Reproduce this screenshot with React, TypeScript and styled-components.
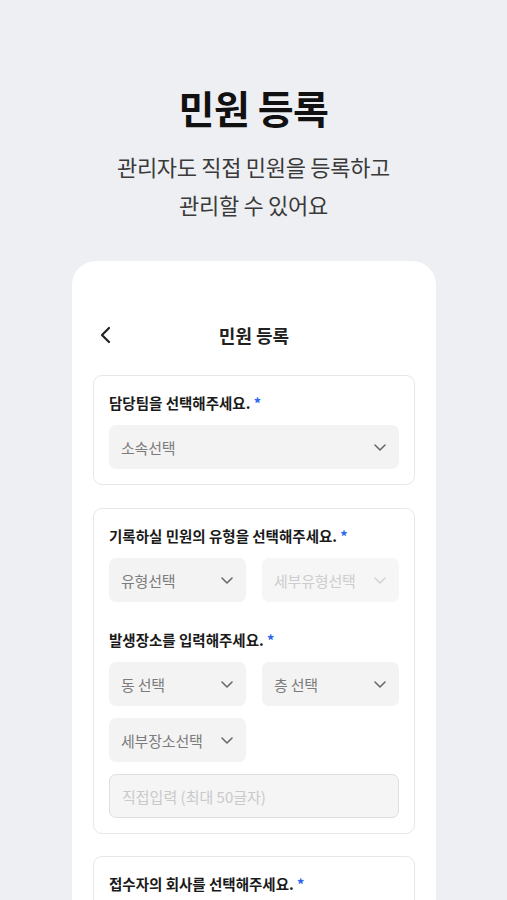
import React from 'react';
import styled, { createGlobalStyle } from 'styled-components';

const GlobalStyle = createGlobalStyle`
    html, body {
        margin: 0;
        padding: 0;
        background: #eeeff2;
        font-family: "Noto Sans CJK KR", "Noto Sans", sans-serif;
        color: #111;
    }
`;

const Page = styled.div`
    width: 507px;
    height: 900px;
    overflow: hidden;
    background: #eeeff2;
    display: flex;
    flex-direction: column;
    align-items: center;
`;

const HeroTitle = styled.h1`
    margin: 84px 0 0;
    font-size: 39px;
    line-height: 46px;
    font-weight: 700;
    color: #111;
    letter-spacing: -0.5px;
`;

const HeroText = styled.p`
    margin: 17px 0 0;
    font-size: 22px;
    line-height: 38px;
    text-align: center;
    color: #3a3a3a;
    letter-spacing: -0.3px;
`;

const Phone = styled.div`
    margin: 38px 0 0 1px;
    width: 364px;
    flex: 1;
    background: #fff;
    border-radius: 24px 24px 0 0;
    padding: 50px 21px 0;
    box-sizing: border-box;
    display: flex;
    flex-direction: column;
    gap: 16px;
`;

const TopBar = styled.div`
    height: 48px;
    display: flex;
    align-items: center;
    justify-content: center;
    position: relative;
`;

const BackButton = styled.span`
    position: absolute;
    left: 3px;
    top: 14px;
    display: flex;
`;

const TopTitle = styled.div`
    font-size: 18px;
    font-weight: 700;
    color: #222;
`;

const Section = styled.div<{ $gapTop?: number }>`
    border: 1px solid #e7e7e7;
    border-radius: 9px;
    padding: 17px 15px 15px;
    margin-top: ${props => props.$gapTop || 0}px;
    display: flex;
    flex-direction: column;
`;

const Label = styled.div<{ $space?: number }>`
    font-size: 14.5px;
    line-height: 20px;
    font-weight: 700;
    color: #1a1a1a;
    margin-top: ${props => props.$space || 0}px;
    margin-bottom: 12px;

    b {
        color: #2f66f0;
        font-weight: 700;
    }
`;

const Row = styled.div`
    display: grid;
    grid-template-columns: 1fr 1fr;
    gap: 16px;
    margin-bottom: 12px;

    &:last-child {
        margin-bottom: 0;
    }
`;

const Select = styled.div<{ $disabled?: boolean }>`
    height: 44px;
    border-radius: 7px;
    background: ${props => props.$disabled ? '#f6f6f6' : '#f3f3f3'};
    padding: 0 13px 0 12px;
    display: flex;
    align-items: center;
    justify-content: space-between;
    font-size: 15px;
    color: ${props => props.$disabled ? '#cdcdcd' : '#7c7c7c'};
    letter-spacing: -0.2px;
`;

const TextInput = styled.div`
    height: 44px;
    border-radius: 7px;
    background: #f5f5f5;
    border: 1px solid #dfdfdf;
    box-sizing: border-box;
    padding: 0 12px;
    display: flex;
    align-items: center;
    font-size: 15px;
    color: #c9c9c9;
`;

const Chevron = ({ light }: { light?: boolean }) => (
    <svg width="12" height="7" viewBox="0 0 12 7">
        <path d="M1 1l5 5 5-5" fill="none" stroke={light ? '#d4d4d4' : '#6a6a6a'} strokeWidth="1.6" strokeLinecap="round" strokeLinejoin="round" />
    </svg>
);

const Dropdown = ({ text, disabled }: { text: string, disabled?: boolean }) => (
    <Select $disabled={disabled}>
        <span>{text}</span>
        <Chevron light={disabled} />
    </Select>
);

export default function App() {
    return (
        <Page>
            <GlobalStyle />
            <HeroTitle>민원 등록</HeroTitle>
            <HeroText>관리자도 직접 민원을 등록하고<br />관리할 수 있어요</HeroText>
            <Phone>
                <TopBar>
                    <BackButton>
                        <svg width="20" height="20" viewBox="0 0 20 20">
                            <path d="M13 3l-7 7 7 7" fill="none" stroke="#222" strokeWidth="2.2" strokeLinecap="round" strokeLinejoin="round" />
                        </svg>
                    </BackButton>
                    <TopTitle>민원 등록</TopTitle>
                </TopBar>
                <Section>
                    <Label>담당팀을 선택해주세요. <b>*</b></Label>
                    <Dropdown text="소속선택" />
                </Section>
                <Section $gapTop={7}>
                    <Label>기록하실 민원의 유형을 선택해주세요. <b>*</b></Label>
                    <Row>
                        <Dropdown text="유형선택" />
                        <Dropdown text="세부유형선택" disabled />
                    </Row>
                    <Label $space={16}>발생장소를 입력해주세요. <b>*</b></Label>
                    <Row>
                        <Dropdown text="동 선택" />
                        <Dropdown text="층 선택" />
                    </Row>
                    <Row>
                        <Dropdown text="세부장소선택" />
                    </Row>
                    <TextInput>직접입력 (최대 50글자)</TextInput>
                </Section>
                <Section $gapTop={6}>
                    <Label>접수자의 회사를 선택해주세요. <b>*</b></Label>
                </Section>
            </Phone>
        </Page>
    );
}
